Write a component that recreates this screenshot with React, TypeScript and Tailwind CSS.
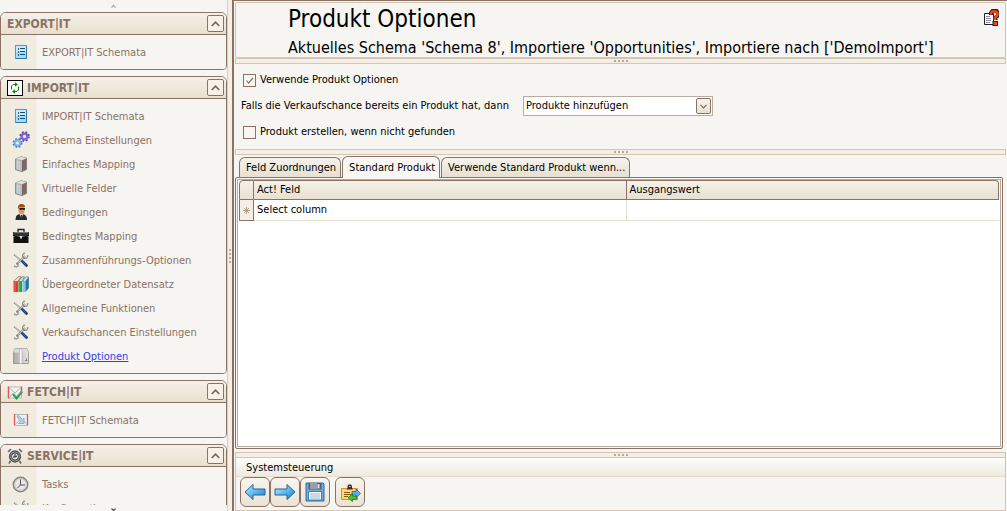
import React, { useState } from 'react';
import clsx from 'clsx';

type IconType = React.FC;

interface NavItem {
  label: string;
  icon: IconType;
}

interface NavSection {
  title: string;
  icon?: IconType;
  items: NavItem[];
}

const ListIcon: IconType = () => (
  <svg width="16" height="16" viewBox="0 0 16 16">
    <rect x="2.5" y="1.5" width="11" height="13" fill="#c8ebfb" stroke="#4a9bce" />
    <path d="M3 14V8h10v6z" fill="#a4dcf7" />
    <path d="M13.5 2v12.500H3" fill="none" stroke="#2a78ad" />
    <path d="M5 5h1M5 8h1M5 11h1" stroke="#12405f" strokeWidth="1.4" />
    <path d="M7 4.5h5M7 7.5h5M7 10.5h5" stroke="#1d4c6b" />
  </svg>
);

const GearsIcon: IconType = () => (
  <svg width="18" height="18" viewBox="0 0 18 18">
    <circle cx="12.5" cy="5.5" r="2.9" fill="none" stroke="#7a66d8" strokeWidth="2.4" />
    <circle cx="12.5" cy="5.5" r="4.5" fill="none" stroke="#5a43b8" strokeWidth="1.5" strokeDasharray="1.8 1.8" />
    <circle cx="5.5" cy="12" r="2.7" fill="none" stroke="#7db6e8" strokeWidth="2.4" />
    <circle cx="5.5" cy="12" r="4.2" fill="none" stroke="#4a80bb" strokeWidth="1.5" strokeDasharray="1.7 1.7" />
  </svg>
);

const ServerIcon: IconType = () => (
  <svg width="16" height="16" viewBox="0 0 16 16">
    <path d="M2.5 3 8 .7l5.5 1.3v11.500L9 15.700l-6.500-2z" fill="#a2a2a2" stroke="#777" strokeWidth=".7" />
    <path d="M2.500 3 8 .7l5.500 1.300L9 4.300z" fill="#dedede" />
    <path d="M3 3.500 9 4.800v10.500L3 13.200z" fill="#bcbcbc" />
    <path d="M4.500 4.500V13M6.500 5v8.800" stroke="#dadada" strokeWidth=".8" />
    <path d="M9 4.800 13.500 2.500v10.800L9 15.300z" fill="#6e6e6e" />
    <path d="M11.500 6v1.800" stroke="#e33" strokeWidth="1.200" />
  </svg>
);

const AgentIcon: IconType = () => (
  <svg width="16" height="16" viewBox="0 0 16 16">
    <path d="M2.500 16c0-4 1.500-6 5.500-6s6 2 6 6z" fill="#25272c" />
    <path d="M6.500 10h3.500L8.500 14.500z" fill="#eef" />
    <path d="M8.300 11v3" stroke="#111" />
    <path d="M5.500 3h6v4c0 2-1.500 3.500-3 3.500s-3-1.500-3-3.500z" fill="#d99a5f" />
    <path d="M5 5C4.500 1.500 6 0 8.500 0S12 1 12 3L6.500 3z" fill="#9a5217" />
    <path d="M6.500 4H12v1.800H10L9.500 5.300 9 5.800H6.500z" fill="#151515" />
  </svg>
);

const BriefcaseIcon: IconType = () => (
  <svg width="18" height="16" viewBox="0 0 18 16">
    <path d="M6 4V1.500h6V4" fill="none" stroke="#222" strokeWidth="1.300" />
    <path d="M1 4h16v4H1z" fill="#333" />
    <path d="M1.500 8.500h15V15h-15z" fill="#111" />
    <path d="M1 7.500 9 10l8-2.500" fill="none" stroke="#000" />
    <path d="M2 4.500h14" stroke="#777" />
    <rect x="8" y="8" width="2" height="2.500" fill="#ddd" />
  </svg>
);

const ToolsIcon: IconType = () => (
  <svg width="16" height="16" viewBox="0 0 16 16">
    <path d="M1 2.500 8.500 9" stroke="#888" strokeWidth="1.400" />
    <path d="M1.500 2.500 7 7.500" stroke="#ddd" strokeWidth=".6" />
    <path d="M3.500 12.500 12 4" stroke="#858585" strokeWidth="1.800" />
    <path d="M3.500 12.500 12 4" stroke="#d8d8d8" strokeWidth=".8" />
    <path d="M14.700 3A2.600 2.600 0 1 1 12 1.200M1.300 13.500a2 2 0 1 0 2.200-2.500" fill="none" stroke="#8b8b8b" strokeWidth="1.200" />
    <path d="m9.500 9.500 4 4" stroke="#1b3f7c" strokeWidth="2.800" strokeLinecap="round" />
    <path d="m9.500 9.200 3.500 3.500" stroke="#5a82bd" strokeWidth=".8" />
  </svg>
);

const BooksIcon: IconType = () => (
  <svg width="16" height="16" viewBox="0 0 16 16">
    <path d="M.500 5.500H5V16H.500z" fill="#e8382c" />
    <path d="M.500 5.500 5 .800h3L5 5.500z" fill="#e9e2d8" stroke="#a33" strokeWidth=".6" />
    <path d="M5.500 5.500h3.500V16H5.500z" fill="#259a3a" />
    <path d="M5.500 5.500 9 .800h2.500L9 5.500z" fill="#cfe6cd" stroke="#286b30" strokeWidth=".6" />
    <path d="M9.500 5.500 13 .800h2.500l-3.300 4.700z" fill="#d8ecf5" stroke="#357b94" strokeWidth=".6" />
    <path d="M9.500 5.500h3V16h-3z" fill="#7cc7e4" />
    <path d="m12.500 5.500 3.300-4.500v11L12.500 16z" fill="#2a729c" />
    <path d="M2 6v10M7 6v10" stroke="#fff" strokeOpacity=".25" />
  </svg>
);

const PackageIcon: IconType = () => (
  <svg width="18" height="16" viewBox="0 0 18 16">
    <defs>
      <linearGradient id="package-side">
        <stop offset="0" stopColor="#aaa" />
        <stop offset="1" stopColor="#e4e4e4" />
      </linearGradient>
    </defs>
    <path d="M1.500 4.500 3 .8h12l1.500 3.700V15.500h-15z" fill="url(#package-side)" stroke="#8d8d8d" strokeWidth=".8" />
    <path d="M1.500 4.500 3 1h12l1.500 3.500z" fill="#dcdcdc" />
    <path d="M7.500 1h2.500v14.500H7.500z" fill="#f4f4f4" stroke="#a5a5a5" strokeWidth=".5" />
    <path d="M14.500 10v3.500M13 12.500h2.500" stroke="#777" strokeWidth=".8" />
  </svg>
);

const SyncIcon: IconType = () => (
  <svg width="16" height="16" viewBox="0 0 16 16">
    <rect x=".5" y=".5" width="15" height="15" fill="#fff" stroke="#000" />
    <path d="M4.500 9.500V6l1.500-1.500h2.500M11.500 6.500V10L10 11.500H7.500" fill="none" stroke="#0a8a0a" />
    <path d="M8 2.200v4.600l3-2.300zM8 9.200v4.600l-3-2.300z" fill="#0a8a0a" />
  </svg>
);

const MailCheckIcon: IconType = () => (
  <svg width="16" height="16" viewBox="0 0 16 16">
    <path d="M1.500 3h13v11h-13z" fill="#f3f3f3" stroke="#bbb" />
    <path d="M1.500 2.500v12M14.500 2.500V8" stroke="#e2575a" strokeWidth="1.500" />
    <path d="m2 3.500 6 5.500 6-5.500M2 14l4-5" fill="none" stroke="#b0b0b0" />
    <path d="m6 10 3.500 4L15 7.500" fill="none" stroke="#2a9447" strokeWidth="2.500" />
    <path d="m6.500 10 3 3L14.500 7.500" fill="none" stroke="#8dd49d" strokeWidth=".7" />
  </svg>
);

const MailInIcon: IconType = () => (
  <svg width="16" height="14" viewBox="0 0 16 14">
    <path d="M1.500 1.500h13v11h-13z" fill="#e9eff3" stroke="#aeb6bb" />
    <path d="M1.500 1v11M14.500 1v11" stroke="#e2575a" strokeWidth="1.300" />
    <path d="m2 12 4.500-5M14 12l-3-4" stroke="#b3bcc2" />
    <path d="m4 3 1.500-.500 4 4L11 5v5.500H5.500L7.500 8.500z" fill="#b4d3e3" stroke="#7fa6bc" strokeWidth=".8" />
  </svg>
);

const AlarmIcon: IconType = () => (
  <svg width="16" height="16" viewBox="0 0 16 16">
    <path d="m1 4 3-3M12 1l3 3M3.500 13 2 15.500M12.500 13l1.500 2.500" stroke="#666" strokeWidth="1.600" />
    <circle cx="8" cy="8.500" r="5.500" fill="#999" stroke="#555" strokeWidth="1.300" />
    <circle cx="8" cy="8.500" r="3.600" fill="#ddd" stroke="#444" />
    <path d="M8 6v3H6M8 9l2-1" fill="none" stroke="#222" />
  </svg>
);

const ClockIcon: IconType = () => (
  <svg width="17" height="17" viewBox="0 0 17 17">
    <circle cx="8.500" cy="8.500" r="7.200" fill="#e8e8e8" stroke="#828282" strokeWidth="1.400" />
    <circle cx="8.500" cy="8.500" r="5.700" fill="none" stroke="#c4c4c4" />
    <path d="M8.500 3.500v5.500H13M8.500 9l-3 3" fill="none" stroke="#555" />
    <circle cx="8.500" cy="9" r="1" fill="#d55" />
  </svg>
);

const HelpDocIcon: IconType = () => (
  <svg width="16" height="18" viewBox="0 0 16 18">
    <path d="M1.500 4.500h9v11h-9z" fill="#fff" stroke="#222" />
    <path d="M3 7.500h4M3 9.500h5M3 11.500h5M3 13.500h4" stroke="#88a" />
    <path d="M8 6V4l1.500-2h4L15 4v2.500l-2.500 2V11" fill="none" stroke="#222" strokeWidth="4" />
    <path d="M8 5.500V4l1.500-1.500h3.500L14.500 4v2l-2.500 2.500V11" fill="none" stroke="#ff4318" strokeWidth="2.400" />
    <rect x="10" y="12.500" width="4.500" height="4" fill="#ff4318" stroke="#222" />
  </svg>
);

const ArrowIcon: React.FC<{ left?: boolean }> = ({ left }) => (
  <svg width="22" height="18" viewBox="0 0 22 18">
    <defs>
      <linearGradient id={left ? 'arrow-l' : 'arrow-r'} x1="0" y1="0" x2="1" y2="1">
        <stop offset="0" stopColor="#c9eeff" />
        <stop offset=".5" stopColor="#5fb9ee" />
        <stop offset="1" stopColor="#147cc9" />
      </linearGradient>
    </defs>
    <path
      d={left ? 'M1 9 9 1.500v4.500h12v6H9v4.500z' : 'M21 9l-8-7.500v4.500H1v6h12v4.500z'}
      fill={left ? 'url(#arrow-l)' : 'url(#arrow-r)'}
      stroke="#2a5e9c"
    />
  </svg>
);

const SaveIcon: IconType = () => (
  <svg width="20" height="20" viewBox="0 0 20 20">
    <path d="M1 1h17l1 1v17H1z" fill="#68aee0" stroke="#34679a" />
    <path d="M3.500 1h13v6.500h-13z" fill="#555e66" />
    <path d="M5 1h7v6H5z" fill="#999fa4" />
    <path d="M12.500 2h2v4.500h-2z" fill="#dfe5ea" />
    <path d="M3.500 9.500h13V18h-13z" fill="#fff" stroke="#427cae" />
    <path d="M5 12h10M5 14h10M5 16h10" stroke="#8bb7d7" />
  </svg>
);

const RunImportIcon: IconType = () => (
  <svg width="21" height="19" viewBox="0 0 21 19">
    <path d="M1.500 5.500h16v11h-16z" fill="#ffd968" stroke="#ee8230" />
    <path d="M4 9.500h6M4 11.500h8M4 13.500h4" stroke="#7d5a1e" />
    <path d="M7.500 5V3L8.500 1.500h2.500L12 3v2l1 1.500H6.500z" fill="#333" />
    <path d="M9 3.500h1.500" stroke="#ddd" />
    <path d="M12 8.500h4V6l4.500 4.500L16 14.500V12h-4z" fill="#58b4f0" stroke="#1b5fa5" strokeWidth=".8" />
    <path d="M16.500 13.200h-4V11L8 14.700l4.500 3.800V16.300h4z" fill="#4fc23c" stroke="#1c7a1c" strokeWidth=".8" />
  </svg>
);

const sections: NavSection[] = [
  { title: 'EXPORT|IT', items: [{ label: 'EXPORT|IT Schemata', icon: ListIcon }] },
  {
    title: 'IMPORT|IT',
    icon: SyncIcon,
    items: [
      { label: 'IMPORT|IT Schemata', icon: ListIcon },
      { label: 'Schema Einstellungen', icon: GearsIcon },
      { label: 'Einfaches Mapping', icon: ServerIcon },
      { label: 'Virtuelle Felder', icon: ServerIcon },
      { label: 'Bedingungen', icon: AgentIcon },
      { label: 'Bedingtes Mapping', icon: BriefcaseIcon },
      { label: 'Zusammenführungs-Optionen', icon: ToolsIcon },
      { label: 'Übergeordneter Datensatz', icon: BooksIcon },
      { label: 'Allgemeine Funktionen', icon: ToolsIcon },
      { label: 'Verkaufschancen Einstellungen', icon: ToolsIcon },
      { label: 'Produkt Optionen', icon: PackageIcon },
    ],
  },
  { title: 'FETCH|IT', icon: MailCheckIcon, items: [{ label: 'FETCH|IT Schemata', icon: MailInIcon }] },
  {
    title: 'SERVICE|IT',
    icon: AlarmIcon,
    items: [
      { label: 'Tasks', icon: ClockIcon },
      { label: 'Konfiguration', icon: ToolsIcon },
    ],
  },
];

const tabs = ['Feld Zuordnungen', 'Standard Produkt', 'Verwende Standard Produkt wenn...'];

const Section: React.FC<{ section: NavSection; active: string; onSelect: (label: string) => void }> = ({
  section,
  active,
  onSelect,
}) => {
  const [open, setOpen] = useState(true);
  const TitleIcon = section.icon;

  return (
    <section className="shrink-0 overflow-hidden rounded-t-md rounded-b-sm border border-[#8b7264] bg-[#f6f5f1]">
      <div className="flex h-[22px] items-center border-b border-[#8b7264] bg-linear-to-b from-[#f4f1eb] to-[#e8e0d0] pr-0.5 pl-1.5">
        {TitleIcon && (
          <span className="mr-1 flex w-4 shrink-0">
            <TitleIcon />
          </span>
        )}
        <h2 className="flex-1 text-[12px] font-bold">{section.title}</h2>
        <button
          type="button"
          aria-label={section.title}
          aria-expanded={open}
          onClick={() => setOpen(!open)}
          className="flex size-[17px] items-center justify-center rounded-xs border border-[#8b7264] bg-[#f6f2ea]"
        >
          <svg width="9" height="6" viewBox="0 0 9 6" className={clsx(!open && 'rotate-180')}>
            <path d="m.7 5 3.800-3.800L8.300 5" fill="none" stroke="#7d6455" strokeWidth="1.700" />
          </svg>
        </button>
      </div>
      {open && (
        <ul className="bg-linear-to-r from-[#f0ece0] from-[35px] to-[#f6f5f1] to-[36px] py-[5px]">
          {section.items.map(({ label, icon: Icon }) => (
            <li key={label} className="flex h-6 items-center">
              <span className="flex w-10 shrink-0 justify-center pr-px">
                <Icon />
              </span>
              <a
                href="#"
                onClick={() => onSelect(label)}
                className={clsx('pt-0.5 pl-px whitespace-nowrap', label === active && 'text-[#3a3af0] underline')}
              >
                {label}
              </a>
            </li>
          ))}
        </ul>
      )}
    </section>
  );
};

const Splitter: React.FC = () => (
  <div className="flex h-1.5 shrink-0 items-center justify-center gap-0.5 border border-[#d3c6b4] bg-[#f4eee4]">
    {[0, 1, 2, 3].map((dot) => (
      <i key={dot} className="size-0.5 bg-[#b9aa94]" />
    ))}
  </div>
);

const CheckOption: React.FC<{ label: string; defaultChecked?: boolean }> = ({ label, defaultChecked }) => (
  <label className="flex h-4 items-center gap-1 self-start pl-1">
    <span className="relative flex">
      <input
        type="checkbox"
        defaultChecked={defaultChecked}
        className="peer size-[13px] appearance-none border border-[#8b7264] bg-[#f8f6f2]"
      />
      <svg
        width="13"
        height="13"
        viewBox="0 0 13 13"
        className="pointer-events-none invisible absolute inset-0 peer-checked:visible"
      >
        <path d="m3.500 6.500 2 2.500L10 4" fill="none" stroke="#8b7264" strokeWidth="1.200" />
      </svg>
    </span>
    {label}
  </label>
);

const ToolButton: React.FC<{ label: string; children: React.ReactNode }> = ({ label, children }) => (
  <button
    type="button"
    aria-label={label}
    className="flex size-[30px] items-center justify-center rounded-md border border-[#8b7264] bg-linear-to-b from-[#f8f5ef] to-[#eae3d5]"
  >
    {children}
  </button>
);

const App: React.FC = () => {
  const [active, setActive] = useState('Produkt Optionen');
  const [tab, setTab] = useState(1);

  return (
    <div className="flex h-screen overflow-hidden bg-[#f6f5f2] font-['DejaVu_Sans_Condensed','DejaVu_Sans',sans-serif] text-[11px] leading-4 text-black">
      {/* Navigation */}
      <nav className="flex w-[227px] shrink-0 flex-col text-[#8b7264]">
        <button type="button" aria-label="Nach oben" className="flex h-3 shrink-0 items-center justify-center">
          <svg width="5" height="4" viewBox="0 0 5 4">
            <path d="m.5 3.500 2-2 2 2" fill="none" stroke="#aaa" strokeWidth="1.300" />
          </svg>
        </button>
        <div className="flex min-h-0 flex-1 flex-col gap-1.5 overflow-hidden">
          {sections.map((section) => (
            <Section key={section.title} section={section} active={active} onSelect={setActive} />
          ))}
        </div>
        <button type="button" aria-label="Nach unten" className="flex h-1.5 shrink-0 items-end justify-center">
          <svg width="5" height="3" viewBox="0 0 5 3">
            <path d="m.5.500 2 2 2-2" fill="none" stroke="#555" strokeWidth="1.200" />
          </svg>
        </button>
      </nav>

      <div className="flex w-[7px] shrink-0 flex-col items-center justify-center gap-0.5 border-r-2 border-l border-r-[#8b7264] border-l-[#d9cfc2] bg-[#f4eee4]">
        {[0, 1, 2, 3].map((dot) => (
          <i key={dot} className="size-0.5 bg-[#b9aa94]" />
        ))}
      </div>

      <main className="flex min-w-0 flex-1 flex-col border-t border-[#8b7264] pt-px pr-px pl-px">
        <header className="flex h-14 shrink-0 items-start justify-between rounded-xs border border-[#d3c6b4] pr-1.5 pl-[52px]">
          <div className="whitespace-nowrap">
            <h1 className="text-[24px] leading-8">Produkt Optionen</h1>
            <p className="text-[16px] leading-[26px]">
              Aktuelles Schema 'Schema 8', Importiere 'Opportunities', Importiere nach ['DemoImport']
            </p>
          </div>
          <button type="button" aria-label="Hilfe" className="pt-1.5">
            <HelpDocIcon />
          </button>
        </header>
        <Splitter />

        {/* Options */}
        <form className="flex shrink-0 flex-col gap-2 px-1 pt-2 pb-[9px]">
          <CheckOption label="Verwende Produkt Optionen" defaultChecked />
          <div className="flex h-5 items-center pl-0.5">
            <label htmlFor="existing" className="w-[282px] whitespace-nowrap">
              Falls die Verkaufschance bereits ein Produkt hat, dann
            </label>
            <span className="relative flex w-[190px]">
              <select
                id="existing"
                className="h-5 w-full appearance-none border border-[#b9aba0] bg-white px-0.5 leading-4"
              >
                <option>Produkte hinzufügen</option>
              </select>
              <span className="pointer-events-none absolute inset-y-0.5 right-0.5 flex w-[15px] items-center justify-center rounded-xs border border-[#8b7264] bg-linear-to-b from-[#f8f5ef] to-[#e8e0d0]">
                <svg width="7" height="5" viewBox="0 0 7 5">
                  <path d="m.5.800 3 3 3-3" fill="none" stroke="#7d6455" strokeWidth="1.200" />
                </svg>
              </span>
            </span>
          </div>
          <CheckOption label="Produkt erstellen, wenn nicht gefunden" />
        </form>
        <Splitter />

        {/* Tabs */}
        <div role="tablist" className="flex h-[22px] shrink-0 items-end gap-px pl-1">
          {tabs.map((label, index) => (
            <button
              key={label}
              type="button"
              role="tab"
              aria-selected={index === tab}
              onClick={() => setTab(index)}
              className={clsx(
                'rounded-t-md border border-b-0 border-[#8b7264] pr-1 pl-1.5 whitespace-nowrap',
                index === tab
                  ? 'relative -mb-px h-[22px] bg-[#f8f7f4]'
                  : 'h-5 bg-linear-to-b from-[#f6f3ed] to-[#e8e0d0]',
              )}
            >
              {label}
            </button>
          ))}
        </div>
        <div className="mr-[3px] flex min-h-0 flex-1 flex-col rounded-xs border border-[#8b7264] bg-[#f8f7f4] p-px">
          <div className="flex-1 border border-[#b9aba0] bg-white px-px">
            <table className="w-full table-fixed border-separate border-spacing-0 text-left">
              <colgroup>
                <col className="w-[15px]" />
                <col />
                <col />
              </colgroup>
              <thead>
                <tr className="h-5 bg-linear-to-b from-[#f4f2ea] to-[#e8e0d0]">
                  <th className="rounded-tl-sm border border-[#8b7264]" aria-label="Zeile" />
                  <th className="border-y border-r border-[#8b7264] px-[3px] font-normal">Act! Feld</th>
                  <th className="rounded-tr-sm border-y border-r border-[#8b7264] px-[3px] font-normal">Ausgangswert</th>
                </tr>
              </thead>
              <tbody>
                <tr className="h-[21px]">
                  <td className="border-x border-b border-[#8b7264] bg-[#f4eee4]">
                    <svg width="7" height="7" viewBox="0 0 7 7" className="mx-auto">
                      <path d="M3.500 0v7M0 3.500h7M1 1l5 5M6 1 1 6" stroke="#a3907f" strokeWidth=".8" />
                    </svg>
                  </td>
                  <td className="border-r border-b border-[#e3ddcd] px-[3px]">Select column</td>
                  <td className="border-b border-[#e3ddcd]" />
                </tr>
              </tbody>
            </table>
          </div>
        </div>

        {/* System control */}
        <footer className="flex shrink-0 flex-col pt-[3px]">
          <Splitter />
          <div className="border-x border-b border-[#d3c6b4] pb-[3px]">
            <h2 className="h-[19px] border-b border-[#e6ddcd] bg-linear-to-b from-[#fdfdfb] to-[#efeade] pt-0.5 pl-2.5">
              Systemsteuerung
            </h2>
            <div className="flex pl-1">
              <ToolButton label="Zurück">
                <ArrowIcon left />
              </ToolButton>
              <ToolButton label="Weiter">
                <ArrowIcon />
              </ToolButton>
              <ToolButton label="Speichern">
                <SaveIcon />
              </ToolButton>
              <span className="w-[5px]" />
              <ToolButton label="Import starten">
                <RunImportIcon />
              </ToolButton>
            </div>
          </div>
        </footer>
      </main>
    </div>
  );
};

export default App;
